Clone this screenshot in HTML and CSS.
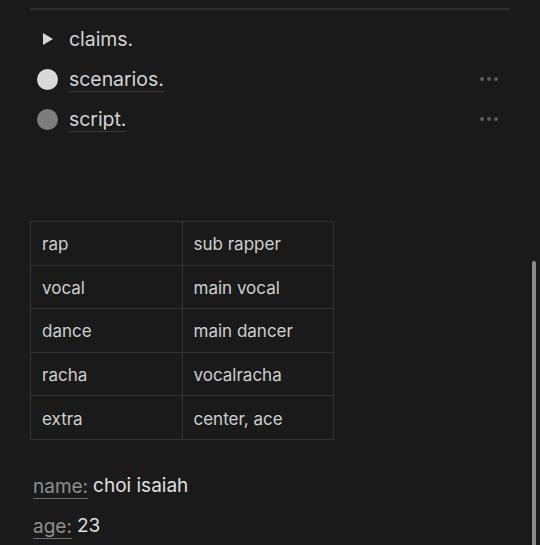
FILE: index.html
```html
<!DOCTYPE html>
<html>
<head>
<meta charset="utf-8">
<link rel="stylesheet" href="styles.css">
</head>
<body>
<div class="page">
  <div class="divider"></div>
  <div class="list">
    <div class="item">
      <div class="icon"><span class="tri"></span></div>
      <span class="label">claims.</span>
    </div>
    <div class="item">
      <div class="icon"><span class="dot light"></span></div>
      <span class="label link">scenarios.</span>
      <span class="more"><i></i><i></i><i></i></span>
    </div>
    <div class="item">
      <div class="icon"><span class="dot grey"></span></div>
      <span class="label link">script.</span>
      <span class="more"><i></i><i></i><i></i></span>
    </div>
  </div>
  <table class="grid">
    <tr><td>rap</td><td>sub rapper</td></tr>
    <tr><td>vocal</td><td>main vocal</td></tr>
    <tr><td>dance</td><td>main dancer</td></tr>
    <tr><td>racha</td><td>vocalracha</td></tr>
    <tr><td>extra</td><td>center, ace</td></tr>
  </table>
  <div class="props">
    <div class="prop"><span class="key">name:</span> <span class="val">choi isaiah</span></div>
    <div class="prop"><span class="key">age:</span> <span class="val">23</span></div>
  </div>
</div>
<div class="scrollbar"></div>
</body>
</html>
```
FILE: styles.css
```css
html, body {
  margin: 0;
  padding: 0;
  background: #1a1a1a;
  height: 545px;
  overflow: hidden;
}
body {
  font-family: Inter, "Noto Sans", sans-serif;
  color: #d4d4d4;
  position: relative;
}
.page {
  padding-left: 30px;
  width: 480px;
  padding-top: 8px;
}
.divider {
  height: 2px;
  background: #2e2e2e;
}
.list {
  padding-top: 9px;
}
.item {
  display: flex;
  align-items: center;
  height: 40px;
}
.icon {
  width: 34px;
  margin-right: 5px;
  display: flex;
  justify-content: center;
  flex-shrink: 0;
}
.tri {
  width: 0;
  height: 0;
  border-top: 6px solid transparent;
  border-bottom: 6px solid transparent;
  border-left: 10px solid #d6d6d6;
  margin-left: 1px;
}
.dot {
  width: 21px;
  height: 21px;
  border-radius: 50%;
}
.dot.light { background: #d9d9d9; }
.dot.grey { background: #7d7d7d; }
.label {
  font-size: 19.5px;
  letter-spacing: -0.05px;
  color: #d4d4d4;
  line-height: 24px;
}
.label.link {
  border-bottom: 1px solid #3c3c3c;
  line-height: 22px;
  padding-bottom: 1px;
  margin-top: 2px;
}
.more {
  margin-left: auto;
  margin-right: 12px;
  display: flex;
  gap: 3px;
}
.more i {
  width: 4px;
  height: 4px;
  border-radius: 50%;
  background: #5e5e5e;
}
.grid {
  margin-top: 82px;
  border-collapse: collapse;
  width: 304px;
}
.grid td {
  box-sizing: border-box;
  border: 1px solid #333333;
  height: 43.6px;
  padding: 2px 0 0 11px;
  font-size: 17px;
  color: #cfcfcf;
  width: 50%;
}
.props {
  padding-top: 26px;
  padding-left: 3px;
}
.prop {
  height: 40px;
  display: flex;
  align-items: center;
  font-size: 19px;
  gap: 5px;
}
.key {
  color: #8e8e8e;
  border-bottom: 1px solid #6a6a6a;
  line-height: 22px;
  margin-top: 4px;
}
.val {
  color: #e0e0e0;
}
.scrollbar {
  position: absolute;
  left: 532px;
  top: 261px;
  width: 4px;
  height: 290px;
  border-radius: 2px;
  background: #8a8a8a;
}
```
